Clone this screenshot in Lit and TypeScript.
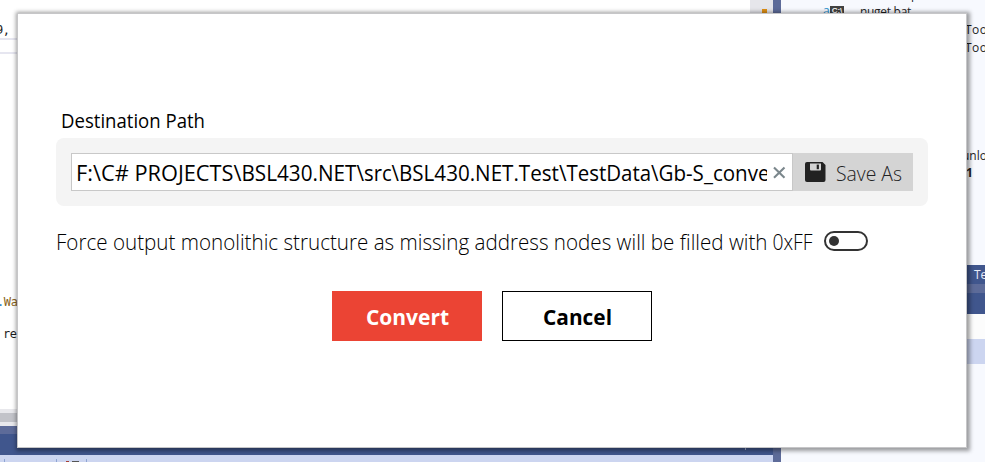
import { LitElement, html, css, svg } from "lit";
import { customElement, state } from "lit/decorators.js";

type Run = [text: string, x: number, width: number];

/** One line of text; every run is set to its own advance width. */
const line = (runs: Run[], width: number, height: number, baseline: number, cls: string) => html`
  <svg class="line ${cls}" width=${width} height=${height}>
    ${runs.map(([text, x, w]) => svg`<text x=${x} y=${baseline} textLength=${w} lengthAdjust="spacingAndGlyphs">${text}</text>`)}
  </svg>`;

@customElement("ide-backdrop")
class IdeBackdrop extends LitElement {
  static styles = css`
    :host { display: grid; grid-template-columns: 773px 8px 1fr; height: 462px; overflow: hidden; position: relative; background: #fff; }
    .left { display: flex; flex-direction: column; }
    .editor { height: 409px; display: flex; justify-content: flex-end; }
    .gutter { width: 23px; background: #e6e6eb; }
    .mark { width: 5px; height: 6px; margin: 9px 0 0 12px; background: #e08f13; }
    .edge { height: 4px; background: #e8e8ec; }
    .thumb { height: 9px; background: #c2c3c9; }
    .gap { height: 8px; background: #5d6b99; }
    .title { height: 21px; background: #40568d; }
    .tools { height: 7px; background: #ccd5f0; display: flex; }
    .split { background: #5d6b99; }
    .right { background: #f7f9fe; display: flex; flex-direction: column; }
    .tree { height: 265px; }
    .tab { height: 19px; background: #40568d; }
    .tabgap { height: 9px; background: #5d6b99; }
    .white { height: 25px; background: #fcfcfc; }
    .row { height: 25px; background: #ccd5f0; }
    .t { position: absolute; white-space: pre; line-height: 16px; color: #1e1e1e; font: 12px/16px "Open Sans", "Noto Sans", sans-serif; }
    .code { font: 12px/16px "DejaVu Sans Mono", monospace; letter-spacing: -.4px; }
    .a { left: -4px; top: 22px; }
    .b { left: -3px; top: 294px; color: #8a6420; }
    .b i { color: #1e7fc8; font-style: normal; }
    .c { left: 3px; top: 326px; }
    .n { left: 860px; top: 4px; letter-spacing: -.3px; }
    .p { left: 911px; top: -13px; }
    .t1 { left: 965px; top: 22px; letter-spacing: .5px; }
    .t2 { left: 965px; top: 40px; letter-spacing: .5px; }
    .u { left: 962px; top: 148px; }
    .one { left: 966px; top: 165px; font-weight: 700; }
    .te { left: 974px; top: 267px; color: #e8ecf8; }
    .lock { left: 823px; top: 3px; color: #1c8fcc; }
    .cmd { position: absolute; left: 830px; top: 6px; width: 14px; height: 10px; background: #424242; color: #fff; font: 700 8px/10px "Liberation Sans", sans-serif; text-align: center; }
    .rule { position: absolute; left: 0; width: 17px; height: 2px; background: #e6e6f0; }
    .r1 { top: 38px; } .r2 { top: 52px; }
    .sep { position: absolute; top: 459px; width: 1px; height: 3px; background: #8fa5d3; }
    .s1 { left: 4px; } .s2 { left: 56px; } .s3 { left: 86px; }
    .dot { position: absolute; top: 461px; height: 1px; }
    .d1 { left: 66px; width: 3px; background: #a64035; }
    .d2 { left: 72px; width: 7px; background: #555; }
    .tick { position: absolute; left: 745px; top: 448px; width: 1px; height: 2px; background: #a4b1d3; }
  `;
  render() {
    return html`
      <div class="left">
        <div class="editor"><div class="gutter"><div class="mark"></div></div></div>
        <div class="edge"></div><div class="thumb"></div><div class="edge"></div>
        <div class="gap"></div><div class="title"></div><div class="tools"></div>
      </div>
      <div class="split"></div>
      <div class="right">
        <div class="tree"></div><div class="tab"></div><div class="tabgap"></div>
        <div class="title"></div><div class="white"></div><div class="row"></div>
      </div>
      <div class="rule r1"></div><div class="rule r2"></div>
      <span class="t code a">9,</span>
      <span class="t code b"><i>.</i>Wa</span>
      <span class="t code c">re</span>
      <span class="t p">p</span>
      <span class="t lock">a</span><span class="cmd">C:\\</span>
      <span class="t n">nuget.bat</span>
      <span class="t t1">Too</span><span class="t t2">Too</span>
      <span class="t u">unlo</span><span class="t one">1</span>
      <span class="t te">Te</span>
      <i class="sep s1"></i><i class="sep s2"></i><i class="sep s3"></i>
      <i class="dot d1"></i><i class="dot d2"></i><i class="tick"></i>
    `;
  }
}

@customElement("app-root")
class AppRoot extends LitElement {
  @state() private path: Run[] = [
    ["F:\\C# PROJECTS\\", 0, 165.5],
    ["BSL430.NET\\", 165.5, 122.5],
    ["src\\", 288, 35],
    ["BSL430.NET.Test\\", 323, 167.5],
    ["TestData\\", 490.5, 92],
    ["Gb-S_conve", 582.5, 111],
  ];

  static styles = css`
    :host { display: block; position: relative; width: 985px; height: 462px; overflow: hidden; }
    * { box-sizing: border-box; }
    .dialog { position: absolute; left: 17px; top: 13px; width: 950px; height: 435px; padding: 94px 38px 0; background: #fff; border: 1px solid #c6c6c8; box-shadow: 1px 1px 4px 2px rgba(0,0,0,.38); }
    .line { display: block; flex: none; overflow: visible; font-family: "Open Sans", "Noto Sans", sans-serif; }
    .label { margin-left: 5px; font-size: 19.5px; }
    .group { display: flex; width: 872px; height: 68px; margin-top: 6px; padding: 15px; background: #f4f4f4; border-radius: 8px; }
    .field { display: flex; width: 722px; height: 38px; border: 1px solid #c8c8c8; background: #fff; }
    .value { width: 695px; padding-left: 4px; overflow: hidden; }
    .path { font-size: 22.3px; }
    .clear { width: 13px; height: 13px; margin: 12px 0 0 6px; flex: none; }
    .save { display: flex; width: 120px; height: 38px; padding: 0; border: 0; background: #d4d4d4; }
    .disk { width: 21px; height: 20px; margin: 9px 10px 0 12px; flex: none; }
    .saveas { font-size: 19.5px; font-weight: 300; fill: #222; }
    .option { display: flex; height: 36px; margin-top: 18px; }
    .force { font-size: 21.7px; font-weight: 300; }
    .switch { width: 44px; height: 20px; margin: 7px 0 0 11px; padding: 3px; border: 2px solid #333; border-radius: 10px; background: #fff; }
    .knob { width: 10px; height: 10px; border-radius: 50%; background: #333; }
    .actions { display: flex; justify-content: center; gap: 20px; margin-top: 31px; }
    .btn { display: flex; justify-content: center; width: 150px; height: 50px; padding: 0; border: 1px solid #000; background: #fff; }
    .primary { border-color: #eb4434; background: #eb4434; fill: #fff; }
    .bold { font-size: 21.5px; font-weight: 700; }
  `;

  render() {
    return html`
      <ide-backdrop></ide-backdrop>
      <section class="dialog">
        ${line([["Destination Path", 0, 144]], 144, 24, 20, "label")}
        <div class="group">
          <div class="field">
            <div class="value">${line(this.path, 694, 36, 27, "path")}</div>
            <svg class="clear" viewBox="0 0 13 13"><path d="M1 1.5 11.5 11.8M11.5 1.5 1 11.8" stroke="#7b878c" stroke-width="2.1" fill="none"/></svg>
          </div>
          <button class="save">
            <svg class="disk" viewBox="0 0 21 20">
              <path fill="#222" d="M2 0H17.5L20.5 3V18a2 2 0 0 1-2 2H2a2 2 0 0 1-2-2V2A2 2 0 0 1 2 0Z"/>
              <path fill="#d4d4d4" d="M5 1.5H16V7.5a1 1 0 0 1-1 1H6a1 1 0 0 1-1-1Z"/>
              <path fill="#222" d="M11.7 2.6h2.2v4.6h-2.2Z"/>
            </svg>
            ${line([["Save As", 0, 66]], 66, 38, 28, "saveas")}
          </button>
        </div>
        <div class="option">
          ${line([["Force output monolithic structure as missing address nodes will be filled with", 0, 711.5], ["0xFF", 716.5, 40]], 757, 36, 26, "force")}
          <div class="switch"><div class="knob"></div></div>
        </div>
        <div class="actions">
          <button class="btn primary">${line([["Convert", 0, 83]], 83, 48, 33, "bold")}</button>
          <button class="btn">${line([["Cancel", 0, 69]], 69, 48, 33, "bold")}</button>
        </div>
      </section>
    `;
  }
}
